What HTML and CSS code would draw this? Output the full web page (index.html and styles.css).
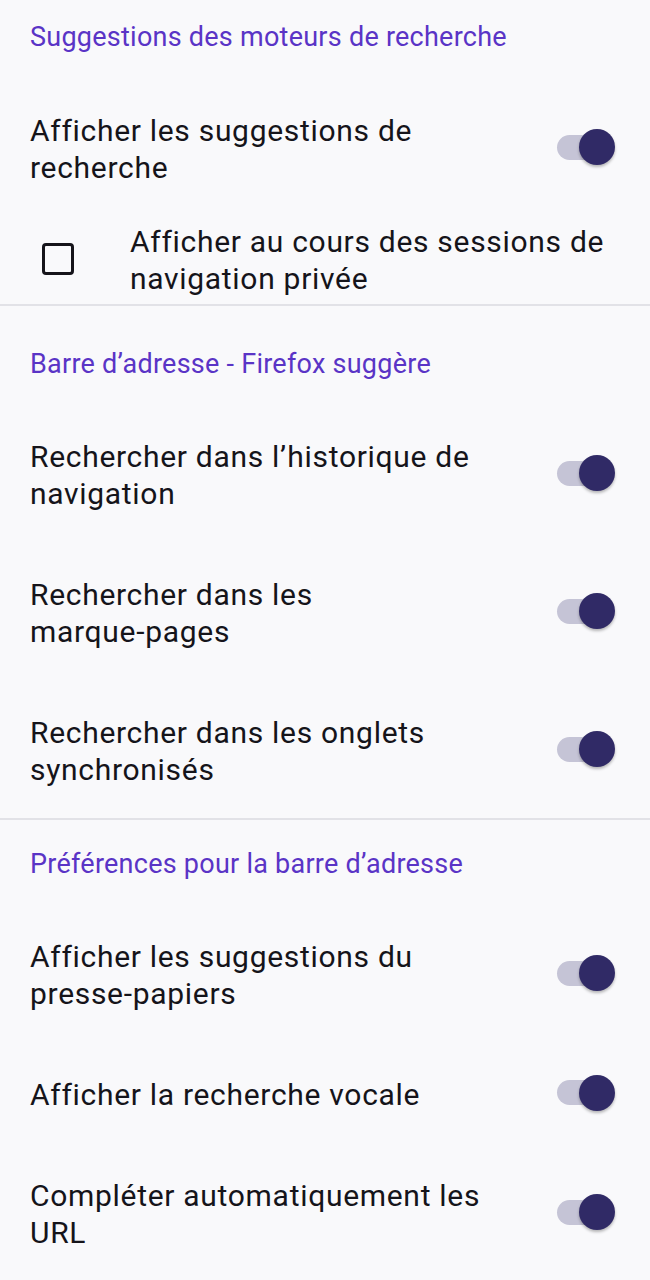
FILE: index.html
```html
<!DOCTYPE html>
<html lang="fr">
<head>
<meta charset="utf-8">
<link rel="stylesheet" href="styles.css">
</head>
<body>
<main class="settings">
  <section class="group">
    <h2 class="group-title first">Suggestions des moteurs de recherche</h2>
    <div class="row">
      <div class="label">Afficher les suggestions de recherche</div>
      <div class="switch"><span class="thumb"></span></div>
    </div>
    <div class="row check-row">
      <span class="checkbox"></span>
      <div class="label">Afficher au cours des sessions de navigation privée</div>
    </div>
  </section>
  <section class="group">
    <h2 class="group-title second">Barre d’adresse - Firefox suggère</h2>
    <div class="row">
      <div class="label">Rechercher dans l’historique de navigation</div>
      <div class="switch"><span class="thumb"></span></div>
    </div>
    <div class="row">
      <div class="label">Rechercher dans les <span class="nowrap">marque-pages</span></div>
      <div class="switch"><span class="thumb"></span></div>
    </div>
    <div class="row">
      <div class="label">Rechercher dans les onglets synchronisés</div>
      <div class="switch"><span class="thumb"></span></div>
    </div>
  </section>
  <section class="group last">
    <h2 class="group-title third">Préférences pour la barre d’adresse</h2>
    <div class="row">
      <div class="label">Afficher les suggestions du <span class="nowrap">presse-papiers</span></div>
      <div class="switch"><span class="thumb"></span></div>
    </div>
    <div class="row">
      <div class="label">Afficher la recherche vocale</div>
      <div class="switch"><span class="thumb"></span></div>
    </div>
    <div class="row">
      <div class="label">Compléter automatiquement les URL</div>
      <div class="switch"><span class="thumb"></span></div>
    </div>
  </section>
</main>
</body>
</html>
```
FILE: styles.css
```css
html, body {
  margin: 0;
  padding: 0;
  background: #f9f9fb;
}
body {
  font-family: Roboto, "Noto Sans", "Liberation Sans", sans-serif;
  color: #15141a;
  height: 1280px;
  overflow: hidden;
}
.group {
  border-bottom: 2px solid #e2e2e7;
}
.group.last {
  border-bottom: none;
}
.group-title {
  margin: 0;
  padding: 21px 30px 25px;
  font-size: 27px;
  line-height: 32px;
  font-weight: 400;
  letter-spacing: 0.25px;
  color: #5a34c6;
}
.group-title.second {
  padding-top: 42px;
  padding-bottom: 24px;
}
.group-title.third {
  padding-top: 28px;
  padding-bottom: 24px;
}
.row {
  display: flex;
  align-items: center;
  padding: 0 35px 0 30px;
}
.label {
  flex: 1;
  font-size: 30px;
  line-height: 37px;
  letter-spacing: 0.7px;
  padding: 34px 0 30px;
  margin-right: 52px;
}
.nowrap {
  white-space: nowrap;
}
.switch {
  position: relative;
  width: 58px;
  height: 25px;
  flex: none;
}
.switch::before {
  content: "";
  position: absolute;
  left: 0;
  top: 0;
  width: 55px;
  height: 25px;
  border-radius: 13px;
  background: #c5c4d6;
}
.thumb {
  position: absolute;
  right: 0;
  top: -5.5px;
  width: 36px;
  height: 36px;
  border-radius: 50%;
  background: #302a66;
  box-shadow: 0 2px 3px rgba(0, 0, 0, 0.28);
}
.check-row {
  padding: 0 12px 0 42px;
}
.check-row .label {
  padding: 7px 0 7px;
  margin-right: 0;
}
.checkbox {
  flex: none;
  box-sizing: border-box;
  width: 32px;
  height: 32px;
  border: 3.5px solid #15141a;
  border-radius: 4px;
  margin-right: 56px;
  margin-top: -3px;
}
```
